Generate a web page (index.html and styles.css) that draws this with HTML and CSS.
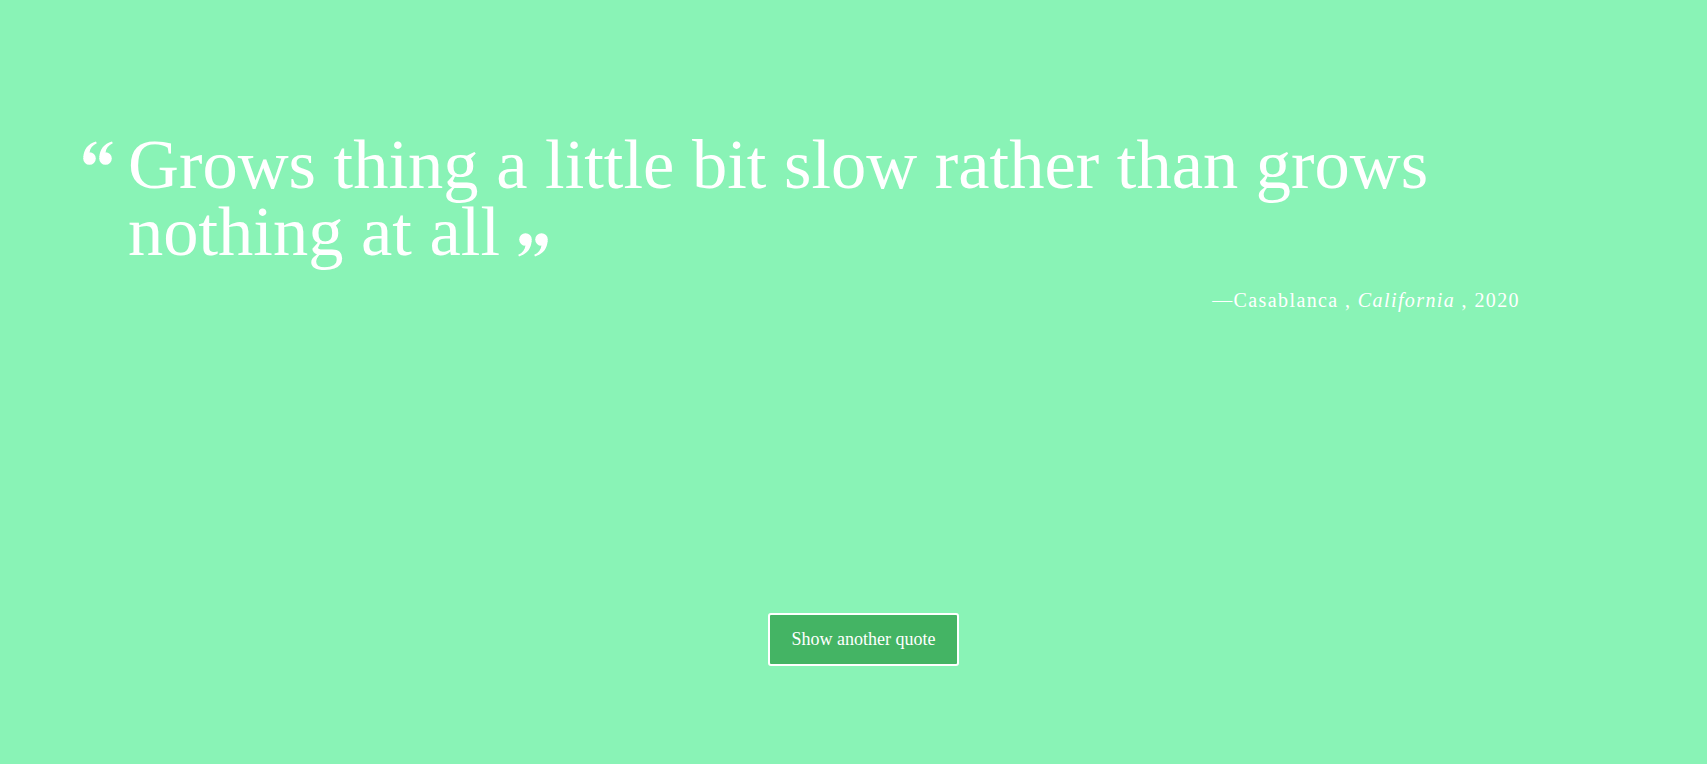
FILE: index.html
```html
<!DOCTYPE html>
<html lang="en">
<head>
<meta charset="utf-8">
<title>Random Quote</title>
<link rel="stylesheet" href="styles.css">
</head>
<body>
<main class="page">
  <figure class="quote-box">
    <blockquote class="quote">
      <svg class="mark mark-open" viewBox="0 0 30 24" aria-hidden="true">
        <g fill="#fff">
          <circle cx="6.5" cy="17.5" r="6.3"/>
          <path d="M13 0.6 L13.8 2.2 C9.5 4.2 7 7.2 6.6 11.3 L0.4 16.5 C0.6 8.5 5 3 13 0.6 Z"/>
          <circle cx="22.5" cy="17.5" r="6.3"/>
          <path d="M29 0.6 L29.8 2.2 C25.5 4.2 23 7.2 22.6 11.3 L16.4 16.5 C16.6 8.5 21 3 29 0.6 Z"/>
        </g>
      </svg>
      <p class="quote-text">Grows thing a little bit slow rather than grows nothing at all <svg class="mark mark-close" viewBox="0 0 30 24" aria-hidden="true"><g fill="#fff" transform="rotate(180 15 12)"><circle cx="6.5" cy="17.5" r="6.3"/><path d="M13 0.6 L13.8 2.2 C9.5 4.2 7 7.2 6.6 11.3 L0.4 16.5 C0.6 8.5 5 3 13 0.6 Z"/><circle cx="22.5" cy="17.5" r="6.3"/><path d="M29 0.6 L29.8 2.2 C25.5 4.2 23 7.2 22.6 11.3 L16.4 16.5 C16.6 8.5 21 3 29 0.6 Z"/></g></svg></p>
    </blockquote>
    <figcaption class="source">—Casablanca , <cite>California</cite> , 2020</figcaption>
  </figure>
  <div class="actions">
    <button class="btn" type="button">Show another quote</button>
  </div>
</main>
</body>
</html>
```

FILE: styles.css
```css
html, body {
  margin: 0;
  padding: 0;
}

body {
  background: #89f3b6;
  color: #fff;
  font-family: "Liberation Serif", "Times New Roman", serif;
  min-height: 100vh;
}

.page {
  display: flex;
  flex-direction: column;
  padding-top: 131px;
}

.quote-box {
  margin: 0 187px 0 83px;
}

.quote {
  margin: 0;
  display: flex;
  align-items: flex-start;
  gap: 15px;
}

.mark {
  width: 30px;
  height: 24px;
  flex: none;
}

.mark-open {
  margin-top: 10px;
}

.quote-text {
  margin: 0;
  font-size: 70.5px;
  line-height: 67px;
  font-weight: 400;
}

.mark-close {
  vertical-align: -2px;
}

.source {
  margin-top: 23px;
  text-align: right;
  font-size: 20px;
  line-height: 24px;
  letter-spacing: 1.4px;
}

.source cite {
  font-style: italic;
}

.actions {
  display: flex;
  justify-content: center;
  padding-left: 20px;
  margin-top: 301px;
}

.btn {
  background: #44b464;
  color: #fff;
  border: 2px solid #fff;
  border-radius: 3px;
  font-family: "Liberation Serif", "Times New Roman", serif;
  font-size: 18px;
  line-height: 21px;
  padding: 14px 22px;
  cursor: pointer;
}
```
